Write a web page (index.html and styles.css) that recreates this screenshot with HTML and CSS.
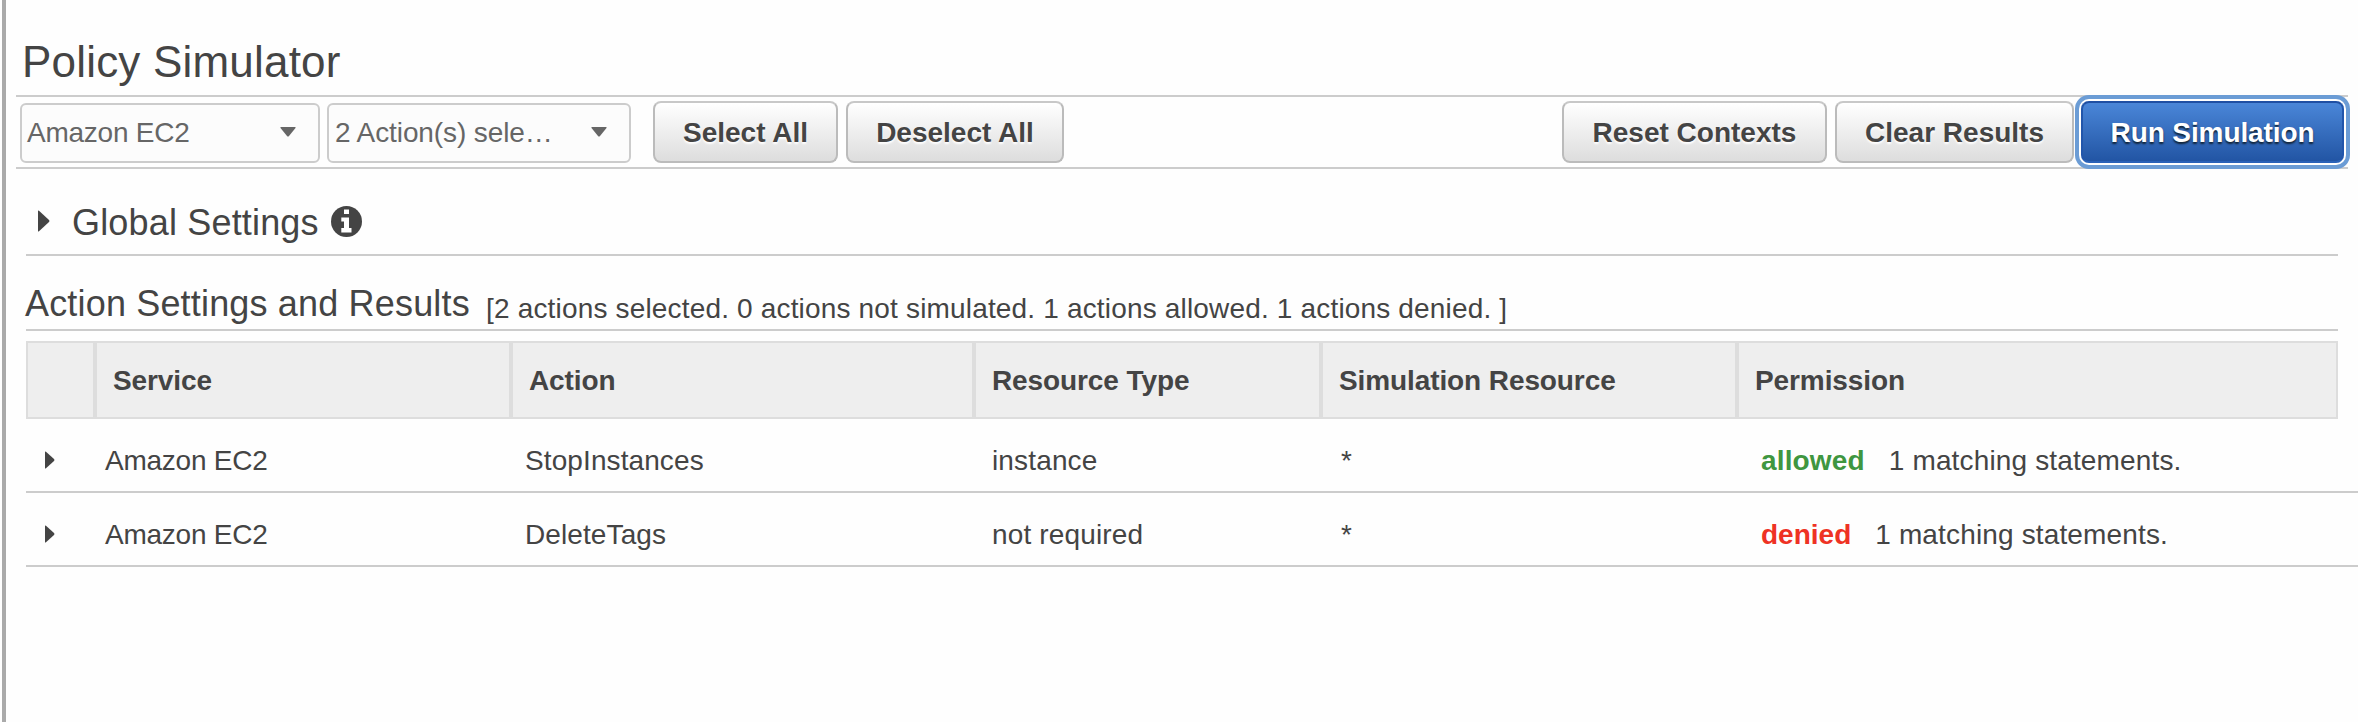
FILE: index.html
```html
<!DOCTYPE html>
<html lang="en">
<head>
<meta charset="utf-8">
<title>Policy Simulator</title>
<link rel="stylesheet" href="styles.css">
</head>
<body>
<main class="panel">
  <h1 class="title">Policy Simulator</h1>
  <div class="toolbar">
    <div class="select select-service"><span>Amazon EC2</span><svg class="caret" viewBox="0 0 16 10"><path d="M1 0H15Q16 0 15.5 1L9 9Q8 10 7 9L.5 1Q0 0 1 0Z"/></svg></div>
    <div class="select select-action"><span>2 Action(s) sele…</span><svg class="caret" viewBox="0 0 16 10"><path d="M1 0H15Q16 0 15.5 1L9 9Q8 10 7 9L.5 1Q0 0 1 0Z"/></svg></div>
    <button class="btn btn-select">Select All</button>
    <button class="btn btn-deselect">Deselect All</button>
    <button class="btn btn-reset">Reset Contexts</button>
    <button class="btn btn-clear">Clear Results</button>
    <button class="btn btn-run">Run Simulation</button>
  </div>
  <section class="global">
    <svg class="arrow-lg" viewBox="0 0 12 22"><path d="M0 1Q0 0 1 .7L11 10Q12 11 11 12L1 21.3Q0 22 0 21Z"/></svg>
    <h2 class="heading heading-global">Global Settings</h2>
    <svg class="info" viewBox="0 0 31 31"><circle cx="15.5" cy="15.5" r="15.5"/><path class="info-mark" d="M13 3.5h5v4.5h-5zM10.300 11.500h7.700v10.500h2.500v4.500H10.300V22h2.700v-6.500h-2.700z"/></svg>
  </section>
  <section class="summary">
    <h2 class="heading heading-results">Action Settings and Results</h2>
    <span class="counts">[2 actions selected. 0 actions not simulated. 1 actions allowed. 1 actions denied. ]</span>
  </section>
  <div class="grid head">
    <div class="th"></div><div class="th">Service</div><div class="th">Action</div><div class="th">Resource Type</div><div class="th">Simulation Resource</div><div class="th">Permission</div>
  </div>
  <div class="grid row">
    <div class="td-arrow"><svg class="arrow-sm" viewBox="0 0 10 18"><path d="M0 1Q0 0 1 .7L9 8Q10 9 9 10L1 17.300Q0 18 0 17Z"/></svg></div>
    <div class="td-service">Amazon EC2</div><div class="td-action">StopInstances</div><div class="td-type">instance</div><div class="td-resource">*</div>
    <div class="td-permission"><b class="allowed">allowed</b><span>1 matching statements.</span></div>
  </div>
  <div class="grid row">
    <div class="td-arrow"><svg class="arrow-sm" viewBox="0 0 10 18"><path d="M0 1Q0 0 1 .7L9 8Q10 9 9 10L1 17.300Q0 18 0 17Z"/></svg></div>
    <div class="td-service">Amazon EC2</div><div class="td-action">DeleteTags</div><div class="td-type">not required</div><div class="td-resource">*</div>
    <div class="td-permission"><b class="denied">denied</b><span>1 matching statements.</span></div>
  </div>
</main>
</body>
</html>
```
FILE: styles.css
```css
* { box-sizing: border-box; }
body {
  margin: 0;
  padding-left: 2px;
  background: #fefefe;
  color: #444;
  font: 28px/32px "Liberation Sans", Arial, sans-serif;
  overflow: hidden;
}
.panel {
  height: 722px;
  border-left: 4px solid #aaa;
}
svg { display: block; flex: none; fill: #444; }
.title {
  margin: 0;
  height: 95px;
  padding: 37px 0 0 16px;
  font-size: 44px;
  line-height: 50px;
  font-weight: 400;
  letter-spacing: .2px;
}
.toolbar {
  display: flex;
  align-items: center;
  width: 2332px;
  height: 74px;
  margin-left: 10px;
  padding-left: 4px;
  border-top: 2px solid #ccc;
  border-bottom: 2px solid #ccc;
}
.select {
  display: flex;
  align-items: center;
  justify-content: space-between;
  height: 60px;
  margin-top: 2px;
  padding: 0 22px 0 6px;
  border: 2px solid #ccc;
  border-radius: 6px;
  background: #fcfcfc;
  color: #666;
  white-space: nowrap;
}
.select-service { width: 300px; padding-left: 5px; letter-spacing: -.25px; }
.select-action { width: 304px; margin-left: 7px; letter-spacing: -.1px; }
.caret { width: 16px; height: 10px; margin-bottom: 2px; fill: #666; }
.btn {
  height: 62px;
  padding: 2px 0 0;
  border: 2px solid #bbb;
  border-top-color: #c8c8c8;
  border-radius: 8px;
  background: linear-gradient(#fff, #ddd);
  color: #444;
  font: bold 28px/32px "Liberation Sans", Arial, sans-serif;
  text-shadow: 0 2px 2px #fff;
  white-space: nowrap;
}
.btn-select { width: 185px; margin-left: 22px; }
.btn-deselect { width: 218px; margin-left: 8px; }
.btn-reset { width: 265px; margin-left: auto; }
.btn-clear { width: 239px; margin-left: 8px; }
.btn-run {
  width: 263px;
  margin: 0 4px 0 7px;
  border-color: #1f4fa3 #2256ab #2a62b8;
  background: linear-gradient(#4a86d8, #2255a4);
  color: #fff;
  letter-spacing: -.1px;
  text-shadow: 0 2px 2px #123;
  box-shadow: 0 0 0 2px #fff, 0 0 0 6px #6b9cd5;
}
.global, .summary { display: flex; margin-left: 20px; width: 2312px; border-bottom: 2px solid #ccc; }
.global { height: 87px; padding: 33px 0 0 12px; }
.heading { margin: 0; padding-top: 1px; font-size: 36px; line-height: 40px; font-weight: 400; white-space: nowrap; letter-spacing: .17px; }
.arrow-lg { width: 12px; height: 22px; margin-top: 8px; }
.heading-global { width: 258px; margin-left: 22px; }
.info { width: 31px; height: 31px; margin: 4px 0 0 1px; }
.info-mark { fill: #fff; }
.summary { height: 75px; padding-top: 27px; }
.heading-results { width: 461px; margin-left: -1px; }
.counts { margin-top: 10px; white-space: nowrap; letter-spacing: .17px; }
.grid { display: grid; grid-template-columns: 69px 416px 463px 347px 416px 601px; margin-left: 20px; }
.head {
  width: 2312px;
  height: 78px;
  margin-top: 10px;
  background: #eee;
  font-weight: 700;
  letter-spacing: -.1px;
}
.th { border: 2px solid #ddd; padding: 22px 0 0 16px; }
.row { height: 74px; border-bottom: 2px solid #ccc; padding-top: 26px; }
.td-arrow { padding: 6px 0 0 19px; }
.arrow-sm { width: 10px; height: 18px; }
.td-service { padding-left: 10px; letter-spacing: -.25px; }
.td-action { padding-left: 14px; letter-spacing: .1px; }
.td-type { padding-left: 18px; letter-spacing: .15px; }
.td-resource { padding-left: 20px; }
.td-permission { display: flex; gap: 24px; padding-left: 24px; }
.td-permission span { letter-spacing: .15px; }
.allowed { color: #3f9640; letter-spacing: .15px; }
.denied { color: #ee3224; }
```
